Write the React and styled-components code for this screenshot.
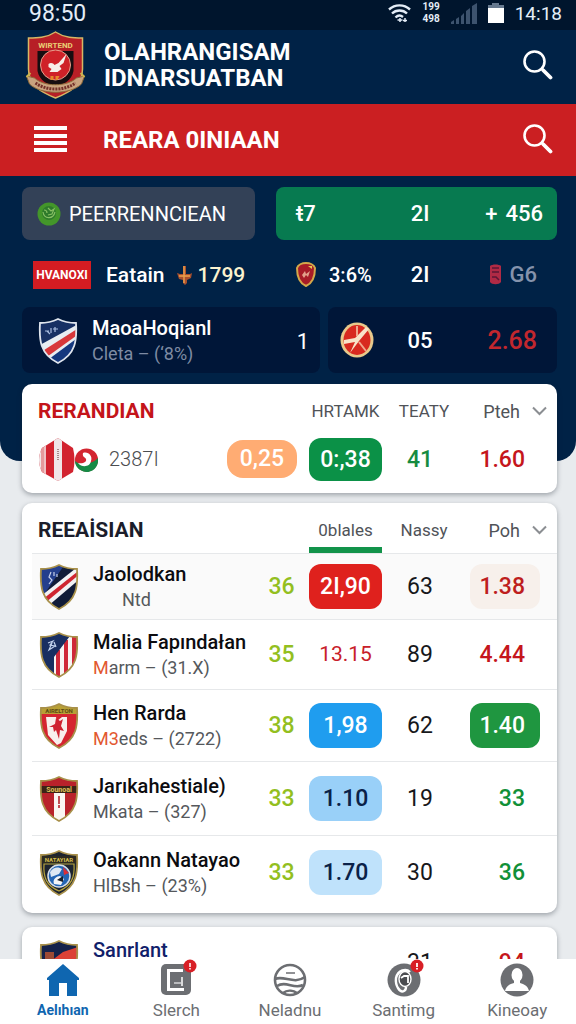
import React from 'react'
import styled, { createGlobalStyle } from 'styled-components'

const GlobalStyle = createGlobalStyle`
  * {
    box-sizing: border-box;
  }
  body {
    margin: 0;
    background: #e8ebee;
    font-family: Roboto, 'Liberation Sans', sans-serif;
  }
  h1, h2, p {
    margin: 0;
  }
  button {
    border: 0;
    padding: 0;
    background: none;
    color: inherit;
    font: inherit;
    cursor: pointer;
  }
  svg {
    display: block;
    flex: none;
  }
`

const Shell = styled.div`
  display: flex;
  flex-direction: column;
  height: 100vh;
`

const Content = styled.main`
  flex: 1;
  min-height: 0;
  overflow-y: auto;
  scrollbar-width: none;
`

const StatusBar = styled.div`
  display: flex;
  align-items: center;
  justify-content: space-between;
  height: 30px;
  padding: 0 14px 4px 29px;
  background: #00152d;
  color: #e4edf7;
  font-size: 23px;
`

const StatusIcons = styled.div`
  display: flex;
  align-items: center;
  gap: 11px;
  font-size: 19px;
`

const StackedText = styled.span`
  display: flex;
  flex-direction: column;
  font-size: 10px;
  font-weight: 700;
  line-height: 12px;
`

const Header = styled.header`
  display: flex;
  align-items: center;
  height: 74px;
  padding: 0 23px 5px 24px;
  background: #002246;
  color: #fff;
`

const Brand = styled.h1`
  flex: 1;
  padding-left: 17px;
  font-size: 24px;
  font-weight: 700;
  line-height: 26px;
`

const SectionBar = styled.div`
  display: flex;
  align-items: center;
  height: 72px;
  padding: 0 23px 2px 34px;
  background: #cb1f22;
  color: #fff;
`

const SectionTitle = styled.h2`
  flex: 1;
  padding: 2px 0 0 36px;
  font-size: 24px;
  font-weight: 700;
`

const Hero = styled.section`
  display: flex;
  flex-direction: column;
  gap: 8px;
  padding: 11px 19px 88px 22px;
  border-radius: 0 0 20px 20px;
  background: #002246;
  color: #fff;
`

const HeroRow = styled.div`
  display: grid;
  grid-template-columns: ${p => p.$columns};
  column-gap: ${p => p.$gap}px;
`

const Panel = styled.div`
  display: flex;
  align-items: center;
  height: ${p => p.$height}px;
  padding: ${p => p.$padding || '0'};
  border-radius: 8px;
  background: ${p => p.$bg || 'transparent'};
`

const StatPanel = styled(Panel)`
  display: grid;
  grid-template-columns: 1fr 74px 100px;
  font-weight: 500;
`

const StatCell = styled.span`
  display: flex;
  align-items: center;
  justify-content: ${p => p.$align || 'center'};
  gap: ${p => p.$gap || 8}px;
  padding: ${p => p.$padding || '0'};
  color: ${p => p.$color || 'inherit'};
  font-size: ${p => (p.$large ? 25 : 22)}px;
`

const PanelLabel = styled.span`
  padding-left: 8px;
  font-size: 20px;
`

const Badge = styled.span`
  width: 58px;
  height: 28px;
  margin-right: 15px;
  background: #d41c22;
  font-size: 12px;
  font-weight: 700;
  line-height: 28px;
  text-align: center;
`

const LiveText = styled.span`
  font-size: ${p => (p.$small ? 20 : 21)}px;
  font-weight: 500;
  color: ${p => p.$color || '#fff'};
`

const LiveMark = styled.span`
  padding: 0 5px 0 11px;
`

const TeamText = styled.div`
  flex: 1;
  padding-left: 14px;
`

const Cards = styled.div`
  display: flex;
  flex-direction: column;
  gap: 10px;
  margin-top: -77px;
  padding: 0 19px 20px 22px;
`

const Card = styled.section`
  padding-left: 10px;
  padding-bottom: ${p => p.$bottom || 0}px;
  margin-top: ${p => p.$top || 0}px;
  border-radius: 10px;
  background: #fff;
  box-shadow: 0 2px 5px rgba(20, 30, 40, 0.35);
`

const Table = styled.table`
  width: 100%;
  table-layout: fixed;
  border-collapse: collapse;
  th,
  td {
    padding: 0;
    text-align: center;
  }
  tbody tr + tr td,
  thead.ruled + tbody tr td {
    border-top: 1px solid #e6e8ea;
  }
`

const TitleCell = styled.th`
  && {
    height: 50px;
    padding-left: 6px;
    padding-top: 4px;
    color: ${p => p.$color};
    font-size: 21px;
    font-weight: 700;
    text-align: left;
  }
`

const HeadCell = styled.th`
  height: 50px;
  color: #505358;
  font-size: 17px;
  font-weight: 400;
`

const TabButton = styled.button`
  display: block;
  width: 73px;
  height: 50px;
  margin: 0 auto;
  padding-top: ${p => (p.$active ? 10 : 4)}px;
  padding-left: ${p => (p.$shift ? 8 : 0)}px;
  border-bottom: ${p => (p.$active ? '6px solid #12934a' : '0')};
`

const SortButton = styled.button`
  display: flex;
  align-items: center;
  justify-content: flex-end;
  gap: 12px;
  width: 100%;
  height: 50px;
  padding: 4px 10px 0 0;
  font-size: 18px;
`

const Row = styled.tr`
  height: ${p => p.$height}px;
  background: ${p => (p.$shaded ? '#fafafa' : 'transparent')};
`

const Team = styled.div`
  display: flex;
  align-items: center;
  padding-left: 7px;
  text-align: left;
  white-space: nowrap;
`

const Name = styled.p`
  color: ${p => p.$color || '#0c0c10'};
  font-size: 20px;
  font-weight: 500;
  line-height: 25px;
`

const Detail = styled.p`
  padding-left: ${p => (p.$indent ? 29 : 0)}px;
  color: ${p => p.$color || '#55585c'};
  font-size: 18px;
  line-height: 25px;
  em {
    color: #e2582f;
    font-style: normal;
  }
`

const Points = styled.span`
  color: #93bf1f;
  font-size: 23px;
  font-weight: 500;
`

const Pill = styled.span`
  display: block;
  width: ${p => p.$width || 73}px;
  margin: 0 auto;
  border-radius: ${p => p.$radius || 12}px;
  background: ${p => p.$bg || 'transparent'};
  color: ${p => p.$color || '#fff'};
  font-size: ${p => (p.$light ? 21 : 23)}px;
  font-weight: ${p => (p.$light ? 400 : 500)};
  line-height: ${p => p.$height || 45}px;
`

const Result = styled(Pill)`
  width: 70px;
  margin: 0 17px 0 auto;
  padding-right: 15px;
  text-align: right;
`

const NumberText = styled.span`
  color: ${p => p.$color || '#17181b'};
  font-size: 23px;
  font-weight: ${p => (p.$color ? 500 : 400)};
`

const Pair = styled.div`
  display: flex;
  align-items: center;
  padding-left: 6px;
  color: #4b4d50;
  font-size: 20px;
  font-weight: 300;
  span {
    padding-left: 11px;
  }
`

const TabBar = styled.nav`
  display: flex;
  height: 65px;
  padding: 0 2px 0 6px;
  background: #fff;
`

const TabLink = styled.a`
  flex: 1;
  display: flex;
  flex-direction: column;
  align-items: center;
  padding-top: 4px;
  color: ${p => (p.$active ? '#0f66b0' : '#6c6e72')};
  font-size: ${p => (p.$active ? 14 : 17)}px;
  font-weight: ${p => (p.$active ? 700 : 400)};
  line-height: 23px;
  text-decoration: none;
`

const shield = 'M20 1 C26 4 32 5 38 5 C39 22 38 36 20 45 C2 36 1 22 2 5 C8 5 14 4 20 1Z'

const crestArt = {
  sash: (
    <>
      <path d="M0 0H40V46H0Z" fill="#15387f" />
      <path d="M0 0H40V8L0 30Z" fill="#173064" />
      <path d="M42 5V18L7 44L0 31V28Z" fill="#e8edf2" />
      <path d="M42 9V15L6 41L3 34Z" fill="#d8373a" />
      <path d="M7 13h4m2-3v5m-4-2l3 3m3-5h5m-3-2v5" fill="none" stroke="#a9bde2" strokeWidth="1.2" />
    </>
  ),
  night: (
    <>
      <path d="M0 0H40V46H0Z" fill="#111c38" />
      <path d="M0 0H26L4 32Z" fill="#243f8d" />
      <path d="M42 0V14L9 42L2 32Z" fill="#f2f2f4" />
      <path d="M42 5V9L6 39L4 35Z" fill="#cf2530" />
      <path d="M12 8l-2 5 3 3-3 4m5-12v4m3-2v3" fill="none" stroke="#c6d0ea" strokeWidth="1.2" />
    </>
  ),
  stripes: (
    <>
      <path d="M0 0H40V46H0Z" fill="#f7f4f3" />
      <path d="M17 18h4v28h-4zM25 8h4v38h-4zM33 0h5v46h-5z" fill="#cf2738" />
      <path d="M0 0H34L15 25V46H0Z" fill="#182e61" />
      <path d="M9 11l5-2-3 4 5 1-6 4 3-7m2-1l2 5" fill="none" stroke="#bfd0ec" strokeWidth="1.2" />
    </>
  ),
  horse: (
    <>
      <path d="M0 0H40V46H0Z" fill="#d52530" />
      <path d="M7 14h10l1 4 5-4h5v14l-6 12-4 2-9-10Z" fill="#f8efec" />
      <path d="M10 24l6-3 1-6 4 3 3-2-2 7 3 5-4-1-1 9-3-9-2 2-1-5Z" fill="#cf2330" />
      <path d="M0 0H40V11H0Z" fill="#b8a035" />
      <text x="20" y="10" fontSize="6" fontWeight="700" textAnchor="middle" fill="#5c4a12">AIRELTON</text>
    </>
  ),
  pillar: (
    <>
      <path d="M0 0H40V46H0Z" fill="#b9222b" />
      <path d="M15 17h11v29h-11z" fill="#faf6f3" />
      <path d="M20 20v8m0 1v3" stroke="#b4222a" strokeWidth="1.6" />
      <path d="M2 10h36v7H2z" fill="#3c2316" />
      <text x="20" y="16" fontSize="7" fontWeight="700" textAnchor="middle" fill="#e0c35a">Sounoal</text>
    </>
  ),
  globe: (
    <>
      <path d="M0 0H40V46H0Z" fill="#1d2430" />
      <path d="M5 14H35C36 28 32 36 20 41C8 36 4 28 5 14Z" fill="none" stroke="#b7a33c" strokeWidth="1.2" />
      <path d="M2 6H38V13H2Z" fill="#2c2a20" />
      <text x="20" y="12" fontSize="6" fontWeight="700" textAnchor="middle" fill="#d5be4f">NATAYIAR</text>
      <circle cx="20" cy="26" r="11" fill="#2465b4" stroke="#d8dfe8" strokeWidth="1.5" />
      <path d="M11 22c4-6 9-5 12-3l-3 5-8 3Z" fill="#dfe8f3" />
      <path d="M24 17l6 6-5 2Z" fill="#d92f38" />
      <path d="M15 34c-2-5 3-8 6-8l4 3-3 6Z" fill="#f3f5f8" />
      <path d="M18 30l6-4v6l-3-1Z" fill="#18202c" />
    </>
  ),
  dusk: (
    <>
      <path d="M0 0H40V46H0Z" fill="#15224a" />
      <path d="M42 6V20L12 42L0 40V30L24 12Z" fill="#dc4136" />
      <path d="M6 12h9v8H6z" fill="#9c4a34" />
    </>
  ),
}

const Crest = ({ kind, edge = '#a8904a' }) => (
  <svg width="40" height="46" viewBox="0 0 40 46" aria-hidden="true">
    <clipPath id={`crest-${kind}`}>
      <path d={shield} />
    </clipPath>
    <g clipPath={`url(#crest-${kind})`}>{crestArt[kind]}</g>
    <path d={shield} fill="none" stroke={edge} strokeWidth="1.8" />
  </svg>
)

const BrandCrest = () => (
  <svg width="63" height="68" viewBox="0 0 62 68" aria-hidden="true">
    <path d="M31 1C40 7 50 7 58 7V38C58 54 46 61 31 67C16 61 4 54 4 38V7C12 7 22 7 31 1Z" fill="#b71f26" stroke="#d5b765" strokeWidth="1.5" />
    <path d="M13 20H49V40C47 50 39 53 31 56C23 53 15 50 13 40Z" fill="#170d10" />
    <text x="31" y="17" fontSize="8" fontWeight="700" textAnchor="middle" fill="#e9cd74">WIRTEND</text>
    <circle cx="31" cy="34" r="15" fill="#cf2228" stroke="#e7a08d" strokeWidth="1" />
    <path d="M24 33c2-2 5-1 6 1l4-2 8-9-3 9-4 3 2 3-4 3-8 0 2-3-3-2Z" fill="#f7efe9" />
    <path d="M26 45h3v4h-3zM31 45h4l-2 4h-2z" fill="#e58a2b" />
    <path d="M2 45l8 2C20 56 42 56 52 47l8-2-3 8C46 64 16 64 5 53Z" fill="#c9a37f" stroke="#8e6b3a" strokeWidth="1" />
    <path d="M11 52C22 60 40 60 51 52" fill="none" stroke="#74312a" strokeWidth="3" strokeDasharray="2 1" />
    <path d="M2 46l4-4M60 46l-4-4" stroke="#cbb44f" strokeWidth="2" />
  </svg>
)

const SearchIcon = () => (
  <svg width="30" height="30" viewBox="0 0 30 30" fill="none" stroke="currentColor" aria-hidden="true">
    <circle cx="11.5" cy="11.5" r="10" strokeWidth="2.6" />
    <path d="M18.5 18.5L20 20" strokeWidth="3" />
    <path d="M20.5 20.5L27.5 27.5" strokeWidth="3.8" strokeLinecap="round" />
  </svg>
)

const MenuIcon = () => (
  <svg width="33" height="28" viewBox="0 0 33 28" fill="currentColor" aria-hidden="true">
    <path d="M0 1h33v4H0zM0 9h33v4H0zM0 16h33v4H0zM0 23h33v4H0z" />
  </svg>
)

const WifiIcon = () => (
  <svg width="23" height="19" viewBox="0 0 23 19" fill="none" stroke="currentColor" strokeWidth="2.4" aria-hidden="true">
    <path d="M1 5.5C7 0 16 0 22 5.5M4 9.5c4-4 11-4 15 0M7.5 13.5c2-2 5-2.500 7.5-.5" />
    <path d="M12 14v4M9.5 16h5M17 14v4M15 16.5h4" strokeWidth="1.5" />
  </svg>
)

const SignalIcon = () => (
  <svg width="26" height="21" viewBox="0 0 26 21" fill="#3d536e" aria-hidden="true">
    <path d="M0 19l3-2v4H0zM5 16l3-2v7H5zM10 13l3-3v11h-3zM15 8l4-3v16h-4zM21 3l5-3v21h-5z" />
  </svg>
)

const BatteryIcon = () => (
  <svg width="16" height="20" viewBox="0 0 16 20" aria-hidden="true">
    <path d="M4 0h7v2h5v5H0V2h4z" fill="#66798f" />
    <path d="M0 5h16v15H0z" fill="#fff" />
  </svg>
)

const GreenSeal = () => (
  <svg width="24" height="24" viewBox="0 0 24 24" aria-hidden="true">
    <circle cx="12" cy="12" r="11.5" fill="#43962a" />
    <circle cx="12" cy="11" r="7" fill="#2e7a2b" />
    <path d="M6 10c1 7 10 8 12 0M7 8c2 0 3 1 3 3m1-5l3 3 3-2-2 5-4 1" fill="none" stroke="#86bf62" strokeWidth="1.2" />
  </svg>
)

const SwordIcon = () => (
  <svg width="17" height="20" viewBox="0 0 17 20" aria-hidden="true">
    <path d="M7 1h3v8h4l2-1-1 5-4 2v3l-2 2-2-2v-3l-4-1-2-6 3 1h3Z" fill="#a8502e" />
    <path d="M8 1v17M3 11h11" stroke="#eda24c" strokeWidth="1.4" />
  </svg>
)

const SmallCrest = () => (
  <svg width="20" height="25" viewBox="0 0 20 25" aria-hidden="true">
    <path d="M10 1C14 1 18 3 19 6C19 15 17 21 10 24C3 21 1 15 1 6C2 3 6 1 10 1Z" fill="#a71c27" stroke="#d3a84a" strokeWidth="2" />
    <path d="M6 13l3-4 1 3 4-3-2 6-2-2-2 3Z" fill="#e2a08a" />
    <path d="M12 4h4v3z" fill="#ecc94e" />
  </svg>
)

const RedTicket = () => (
  <svg width="13" height="21" viewBox="0 0 13 21" aria-hidden="true">
    <path d="M1 2C3 0 10 0 12 2V18C10 21 3 21 1 18Z" fill="#b02a45" />
    <path d="M3 4h7M3 8h7M3 13h4l3 3" fill="none" stroke="#5b1735" strokeWidth="1.5" />
  </svg>
)

const RoundCrest = () => (
  <svg width="34" height="36" viewBox="0 0 34 36" aria-hidden="true">
    <ellipse cx="17" cy="18" rx="16.5" ry="17.5" fill="#e8c98b" />
    <ellipse cx="17" cy="18" rx="13.5" ry="15" fill="#d8291f" />
    <path d="M29 7L19 19L10 31L15 20L4 22V18L15 16L26 5Z" fill="#f8e3c8" />
    <path d="M17 4V14M19 20L26 29" stroke="#f0a78c" strokeWidth="2" />
  </svg>
)

const HexFlag = () => (
  <svg width="37" height="43" viewBox="0 0 37 43" aria-hidden="true">
    <clipPath id="hex-flag">
      <path d="M20 0L35 10C37 18 37 26 35 34L20 43L4 34C0 26 0 18 4 10Z" />
    </clipPath>
    <g clipPath="url(#hex-flag)">
      <path d="M0 0H37V43H0Z" fill="#d2232f" />
      <path d="M0 0H3V43H0ZM16 0h8v43h-8z" fill="#f0e6e8" />
      <path d="M3 0h3v43H3z" fill="#e59a9c" />
      <path d="M6 0h2v43H6z" fill="#efc2c4" />
      <path d="M20 11v12" stroke="#8d6b6d" strokeWidth="1.5" strokeDasharray="1 1" />
    </g>
  </svg>
)

const RoundFlag = () => (
  <svg width="23" height="27" viewBox="0 0 23 27" aria-hidden="true">
    <circle cx="11.5" cy="14" r="11.5" fill="#d32631" />
    <path d="M0 15C5 20 18 18 23 12C24 20 19 26 11 26C4 25 0 20 0 15Z" fill="#168a45" />
    <path d="M8 7c5-2 10 3 8 8-1 6-9 7-13 2 5 1 9-1 8-4-1-2-4-2-3-6Z" fill="#fff" />
  </svg>
)

const Chevron = () => (
  <svg width="15" height="10" viewBox="0 0 15 10" fill="none" stroke="#8b8e92" strokeWidth="2" aria-hidden="true">
    <path d="M1 1.5L7.5 8L14 1.5" />
  </svg>
)

const HomeIcon = () => (
  <svg width="36" height="36" viewBox="0 0 36 36" fill="currentColor" aria-hidden="true">
    <path d="M18 1L34 15V17H32V33H22V20H14V33H4V17H2V15Z" />
  </svg>
)

const NewsIcon = () => (
  <svg width="36" height="36" viewBox="0 0 36 36" overflow="visible" aria-hidden="true">
    <rect x="3" y="1" width="30" height="31" rx="5" fill="currentColor" />
    <path d="M25 7.5H10.5V26.5H26" fill="none" stroke="#fff" strokeWidth="3" />
    <path d="M24 14V23" stroke="#fff" strokeWidth="1.5" />
    <path d="M16 20h7" stroke="#d5d6d8" strokeWidth="1.5" />
    <circle cx="32" cy="3" r="6.5" fill="#d81f26" />
    <path d="M32 0v4m0 1v1.5" stroke="#fff" strokeWidth="1.5" />
  </svg>
)

const BallIcon = () => (
  <svg width="36" height="36" viewBox="0 0 36 36" fill="none" stroke="currentColor" strokeWidth="2.6" aria-hidden="true">
    <circle cx="18" cy="17" r="15" />
    <path d="M3 16C12 12 22 22 33 14M5 23C14 17 22 27 31 22M11 30C16 26 22 28 25 30" />
    <path d="M14 10h9" strokeWidth="1.5" />
  </svg>
)

const SettingIcon = () => (
  <svg width="36" height="36" viewBox="0 0 36 36" overflow="visible" aria-hidden="true">
    <circle cx="18" cy="17" r="16.5" fill="currentColor" />
    <path d="M24 9C20 5 12 7 10 15C9 23 14 30 18 28C20 27 20 25 20 24" fill="none" stroke="#fff" strokeWidth="2.4" />
    <ellipse cx="19" cy="16" rx="6" ry="7.5" fill="#4a4c50" stroke="#fff" strokeWidth="1.4" />
    <path d="M15 15l3-2h4v7" fill="none" stroke="#fff" strokeWidth="1.8" />
    <circle cx="31" cy="3" r="6.5" fill="#d81f26" />
    <path d="M31 0v4m0 1v1.5" stroke="#fff" strokeWidth="1.8" />
  </svg>
)

const ProfileIcon = () => (
  <svg width="36" height="36" viewBox="0 0 36 36" aria-hidden="true">
    <circle cx="18" cy="17" r="16.5" fill="currentColor" />
    <ellipse cx="18" cy="12" rx="5.5" ry="7" fill="#fff" />
    <path d="M15 17H21V20C25 21 29 23 30 28H6C7 23 11 21 15 20Z" fill="#fff" />
  </svg>
)

const teams = [
  { crest: 'night', name: 'Jaolodkan', detail: 'Ntd', indent: true, height: 66, shaded: true, points: '36', odds: '2I,90', oddsBg: '#df211d', played: '63', result: '1.38', resultBg: '#f7f0eb', resultColor: '#be1e1e' },
  { crest: 'stripes', name: 'Malia Fapındałan', accent: 'M', detail: 'arm – (31.X)', height: 70, points: '35', odds: '13.15', oddsColor: '#c8202a', light: true, played: '89', result: '4.44', resultColor: '#c5161c' },
  { crest: 'horse', name: 'Hen Rarda', accent: 'M3', detail: 'eds – (2722)', height: 72, points: '38', odds: '1,98', oddsBg: '#1f9def', played: '62', result: '1.40', resultBg: '#1f9640' },
  { crest: 'pillar', name: 'Jarıkahestiale)', detail: 'Mkata – (327)', height: 74, points: '33', odds: '1.10', oddsBg: '#99d0f8', oddsColor: '#0a2148', played: '19', result: '33', resultColor: '#119038' },
  { crest: 'globe', name: 'Oakann Natayao', detail: 'HlBsh – (23%)', height: 74, points: '33', odds: '1.70', oddsBg: '#bfe2fb', oddsColor: '#0a2148', played: '30', result: '36', resultColor: '#119038' },
]

const nextTeam = { crest: 'dusk', name: 'Sanrlant', nameColor: '#10206a', detail: 'Marta – (21%)', height: 72, played: '31', result: '94', resultColor: '#c5161c' }

const tabs = [
  { label: 'Aelıhıan', icon: <HomeIcon />, active: true },
  { label: 'Slerch', icon: <NewsIcon /> },
  { label: 'Neladnu', icon: <BallIcon /> },
  { label: 'Santimg', icon: <SettingIcon /> },
  { label: 'Kineoay', icon: <ProfileIcon /> },
]

const Columns = ({ points = 53 }) => (
  <colgroup>
    <col />
    <col width={points} />
    <col width="75" />
    <col width="74" />
    <col width="100" />
  </colgroup>
)

const TeamRow = ({ team }) => (
  <Row $height={team.height} $shaded={team.shaded}>
    <td>
      <Team>
        <Crest kind={team.crest} />
        <TeamText>
          <Name $color={team.nameColor}>{team.name}</Name>
          <Detail $indent={team.indent}>
            {team.accent && <em>{team.accent}</em>}
            {team.detail}
          </Detail>
        </TeamText>
      </Team>
    </td>
    <td><Points>{team.points}</Points></td>
    <td>
      {team.odds && (
        <Pill $bg={team.oddsBg} $color={team.oddsColor} $light={team.light}>{team.odds}</Pill>
      )}
    </td>
    <td><NumberText>{team.played}</NumberText></td>
    <td><Result $bg={team.resultBg} $color={team.resultColor}>{team.result}</Result></td>
  </Row>
)

const App = () => {
  return (
    <Shell>
      <GlobalStyle />
      <Content>
        <StatusBar>
          <span>98:50</span>
          <StatusIcons>
            <WifiIcon />
            <StackedText>
              <span>199</span>
              <span>498</span>
            </StackedText>
            <SignalIcon />
            <BatteryIcon />
            <span>14:18</span>
          </StatusIcons>
        </StatusBar>
        <Header>
          <BrandCrest />
          <Brand>OLAHRANGISAM<br />IDNARSUATBAN</Brand>
          <button type="button" aria-label="Search"><SearchIcon /></button>
        </Header>
        <SectionBar>
          <button type="button" aria-label="Menu"><MenuIcon /></button>
          <SectionTitle>REARA 0INIAAN</SectionTitle>
          <button type="button" aria-label="Search section"><SearchIcon /></button>
        </SectionBar>

        <Hero>
          <HeroRow $columns="233fr 281fr" $gap={21}>
            <Panel $height={53} $padding="0 15px" $bg="#334157">
              <GreenSeal />
              <PanelLabel>PEERRENNCIEAN</PanelLabel>
            </Panel>
            <StatPanel $height={53} $bg="#077a50">
              <StatCell $align="flex-start" $padding="0 0 0 20px">ŧ7</StatCell>
              <StatCell>2I</StatCell>
              <StatCell $align="flex-end" $padding="0 14px 0 0">
                <span>+</span>
                <span>456</span>
              </StatCell>
            </StatPanel>
          </HeroRow>
          <HeroRow $columns="254fr 281fr" $gap={0}>
            <Panel $height={51} $padding="2px 0 0 11px">
              <Badge>HVANOXI</Badge>
              <LiveText>Eatain</LiveText>
              <LiveMark><SwordIcon /></LiveMark>
              <LiveText $color="#fbf3cf">1799</LiveText>
            </Panel>
            <StatPanel $height={51} $padding="2px 0 0 0">
              <StatCell $align="flex-start" $padding="0 0 0 20px" $gap={13}>
                <SmallCrest />
                <LiveText $small>3:6%</LiveText>
              </StatCell>
              <StatCell>2I</StatCell>
              <StatCell $align="flex-end" $padding="0 20px 0 0" $color="#8593ac">
                <RedTicket />
                <span>G6</span>
              </StatCell>
            </StatPanel>
          </HeroRow>
          <HeroRow $columns="298fr 229fr" $gap={8}>
            <Panel $height={66} $padding="2px 11px 0 16px" $bg="#001638">
              <Crest kind="sash" edge="#dfe5ee" />
              <TeamText>
                <Name $color="#fff">MaoaHoqianl</Name>
                <Detail $color="#7e8ba3">Cleta – (‘8%)</Detail>
              </TeamText>
              <StatCell>1</StatCell>
            </Panel>
            <StatPanel $height={66} $bg="#001638">
              <StatCell $align="flex-start" $padding="0 0 0 12px"><RoundCrest /></StatCell>
              <StatCell>05</StatCell>
              <StatCell $align="flex-end" $padding="0 20px 0 0" $color="#c2272e" $large>2.68</StatCell>
            </StatPanel>
          </HeroRow>
        </Hero>

        <Cards>
          <Card $bottom={9}>
            <Table>
              <Columns points={92} />
              <thead>
                <tr>
                  <TitleCell $color="#c4141a" colSpan={2}>RERANDIAN</TitleCell>
                  <HeadCell><TabButton type="button">HRTAMK</TabButton></HeadCell>
                  <HeadCell><TabButton type="button" $shift>TEATY</TabButton></HeadCell>
                  <HeadCell><SortButton type="button">Pteh<Chevron /></SortButton></HeadCell>
                </tr>
              </thead>
              <tbody>
                <Row $height={50}>
                  <td>
                    <Pair>
                      <HexFlag />
                      <RoundFlag />
                      <span>2387I</span>
                    </Pair>
                  </td>
                  <td><Pill $width={70} $height={38} $radius={16} $bg="#ffac73">0,25</Pill></td>
                  <td><Pill $height={43} $bg="#0b9147">0:,38</Pill></td>
                  <td><NumberText $color="#168b40">41</NumberText></td>
                  <td><Result $color="#c5161c">1.60</Result></td>
                </Row>
              </tbody>
            </Table>
          </Card>

          <Card $bottom={3}>
            <Table>
              <Columns />
              <thead className="ruled">
                <tr>
                  <TitleCell $color="#1b1d2b" colSpan={2}>REEAİSIAN</TitleCell>
                  <HeadCell><TabButton type="button" $active>0blales</TabButton></HeadCell>
                  <HeadCell><TabButton type="button" $shift>Nassy</TabButton></HeadCell>
                  <HeadCell><SortButton type="button">Poh<Chevron /></SortButton></HeadCell>
                </tr>
              </thead>
              <tbody>
                {teams.map(team => (
                  <TeamRow team={team} key={team.name} />
                ))}
              </tbody>
            </Table>
          </Card>

          <Card $top={4}>
            <Table>
              <Columns />
              <tbody>
                <TeamRow team={nextTeam} />
              </tbody>
            </Table>
          </Card>
        </Cards>
      </Content>

      <TabBar>
        {tabs.map(tab => (
          <TabLink href="#" $active={tab.active} key={tab.label}>
            {tab.icon}
            {tab.label}
          </TabLink>
        ))}
      </TabBar>
    </Shell>
  )
}

export default App
